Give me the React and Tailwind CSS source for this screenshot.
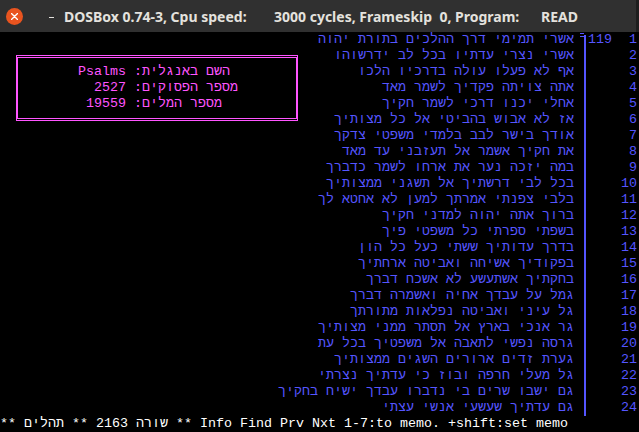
import React from "react";

const verses = [
  "אשרי תמימי דרך ההלכים בתורת יהוה",
  "אשרי נצרי עדתיו בכל לב ידרשוהו",
  "אף לא פעלו עולה בדרכיו הלכו",
  "אתה צויתה פקדיך לשמר מאד",
  "אחלי יכנו דרכי לשמר חקיך",
  "אז לא אבוש בהביטי אל כל מצותיך",
  "אודך בישר לבב בלמדי משפטי צדקך",
  "את חקיך אשמר אל תעזבני עד מאד",
  "במה יזכה נער את ארחו לשמר כדברך",
  "בכל לבי דרשתיך אל תשגני ממצותיך",
  "בלבי צפנתי אמרתך למען לא אחטא לך",
  "ברוך אתה יהוה למדני חקיך",
  "בשפתי ספרתי כל משפטי פיך",
  "בדרך עדותיך ששתי כעל כל הון",
  "בפקודיך אשיחה ואביטה ארחתיך",
  "בחקתיך אשתעשע לא אשכח דברך",
  "גמל על עבדך אחיה ואשמרה דברך",
  "גל עיני ואביטה נפלאות מתורתך",
  "גר אנכי בארץ אל תסתר ממני מצותיך",
  "גרסה נפשי לתאבה אל משפטיך בכל עת",
  "גערת זדים ארורים השגים ממצותיך",
  "גל מעלי חרפה ובוז כי עדתיך נצרתי",
  "גם ישבו שרים בי נדברו עבדך ישיח בחקיך",
  "גם עדתיך שעשעי אנשי עצתי",
];

const info = [
  ["Psalms", "השם באנגלית:"],
  ["2527", "מספר הפסוקים:"],
  ["19559", "מספר המלים:"],
];

const mono = { fontFamily: '"Liberation Mono", "DejaVu Sans Mono", monospace' };

export default function App() {
  return (
    <div className="w-[639px] h-[432px] overflow-hidden bg-black">
      {/* window title bar */}
      <div
        className="h-[32px] bg-[#303030] border-r-[3px] border-[#1e1e1e] flex items-center text-[14px] font-bold text-[#e4e2de]"
        style={{ fontFamily: '"Noto Sans", "Open Sans", sans-serif' }}
      >
        <div className="ml-[6px] w-[17px] h-[17px] rounded-full bg-[#e9541f] flex items-center justify-center">
          <svg width="7" height="7" viewBox="0 0 7 7">
            <path d="M0.5 0.5 L6.5 6.5 M6.5 0.5 L0.5 6.5" stroke="#fff" strokeWidth="1.4" strokeLinecap="round" />
          </svg>
        </div>
        <div className="ml-[26px] w-[5px] h-[1px] bg-[#e4e2de] mt-[3px]"></div>
        <span className="ml-[10px] w-[210px] whitespace-pre">DOSBox 0.74-3, Cpu speed:</span>
        <span className="w-[267px] whitespace-pre">3000 cycles, Frameskip  0, Program:</span>
        <span>READ</span>
      </div>

      {/* dos screen */}
      <div className="relative h-[400px] text-[13.34px] leading-[16px]" style={mono}>
        {verses.map((v, i) => (
          <div key={i} className="flex h-[16px] text-[#5555ff]">
            <div dir="rtl" className="w-[574px] whitespace-pre">{v}</div>
            <div className="w-[10px] flex justify-end">
              {i === 0 && (
                <div className="w-[4px] mt-[1px] h-[4px] border-y border-[#5555ff]"></div>
              )}
            </div>
            <div className={i === 0 ? "w-[2px] mt-[3px] bg-[#5555ff]" : "w-[2px] bg-[#5555ff]"}></div>
            <div className="flex-1 flex justify-between pl-[2px] pr-[2px]">
              <span>{i === 0 ? "119" : ""}</span>
              <span>{i + 1}</span>
            </div>
          </div>
        ))}

        {/* status line */}
        <div className="flex h-[16px] text-white whitespace-pre">
          <span>** </span>
          <span dir="rtl">תהלים</span>
          <span> ** 2163 </span>
          <span dir="rtl">שורה</span>
          <span> ** Info Find Prv Nxt 1-7:to memo. +shift:set memo</span>
        </div>

        {/* info window */}
        <div className="absolute left-[16px] top-[23px] w-[282px] h-[66px] border-x-2 border-x-[#ff55ff] border-y-[3px] border-double border-y-[#ff55ff] pt-[6px] text-[#ff55ff]">
          {info.map(([val, label], i) => (
            <div key={i} className="flex h-[16px]">
              <span className="w-[108px] text-right whitespace-pre">{val}</span>
              <span dir="rtl" className="ml-[8px] text-left whitespace-pre">{label}</span>
            </div>
          ))}
        </div>
      </div>
    </div>
  );
}
